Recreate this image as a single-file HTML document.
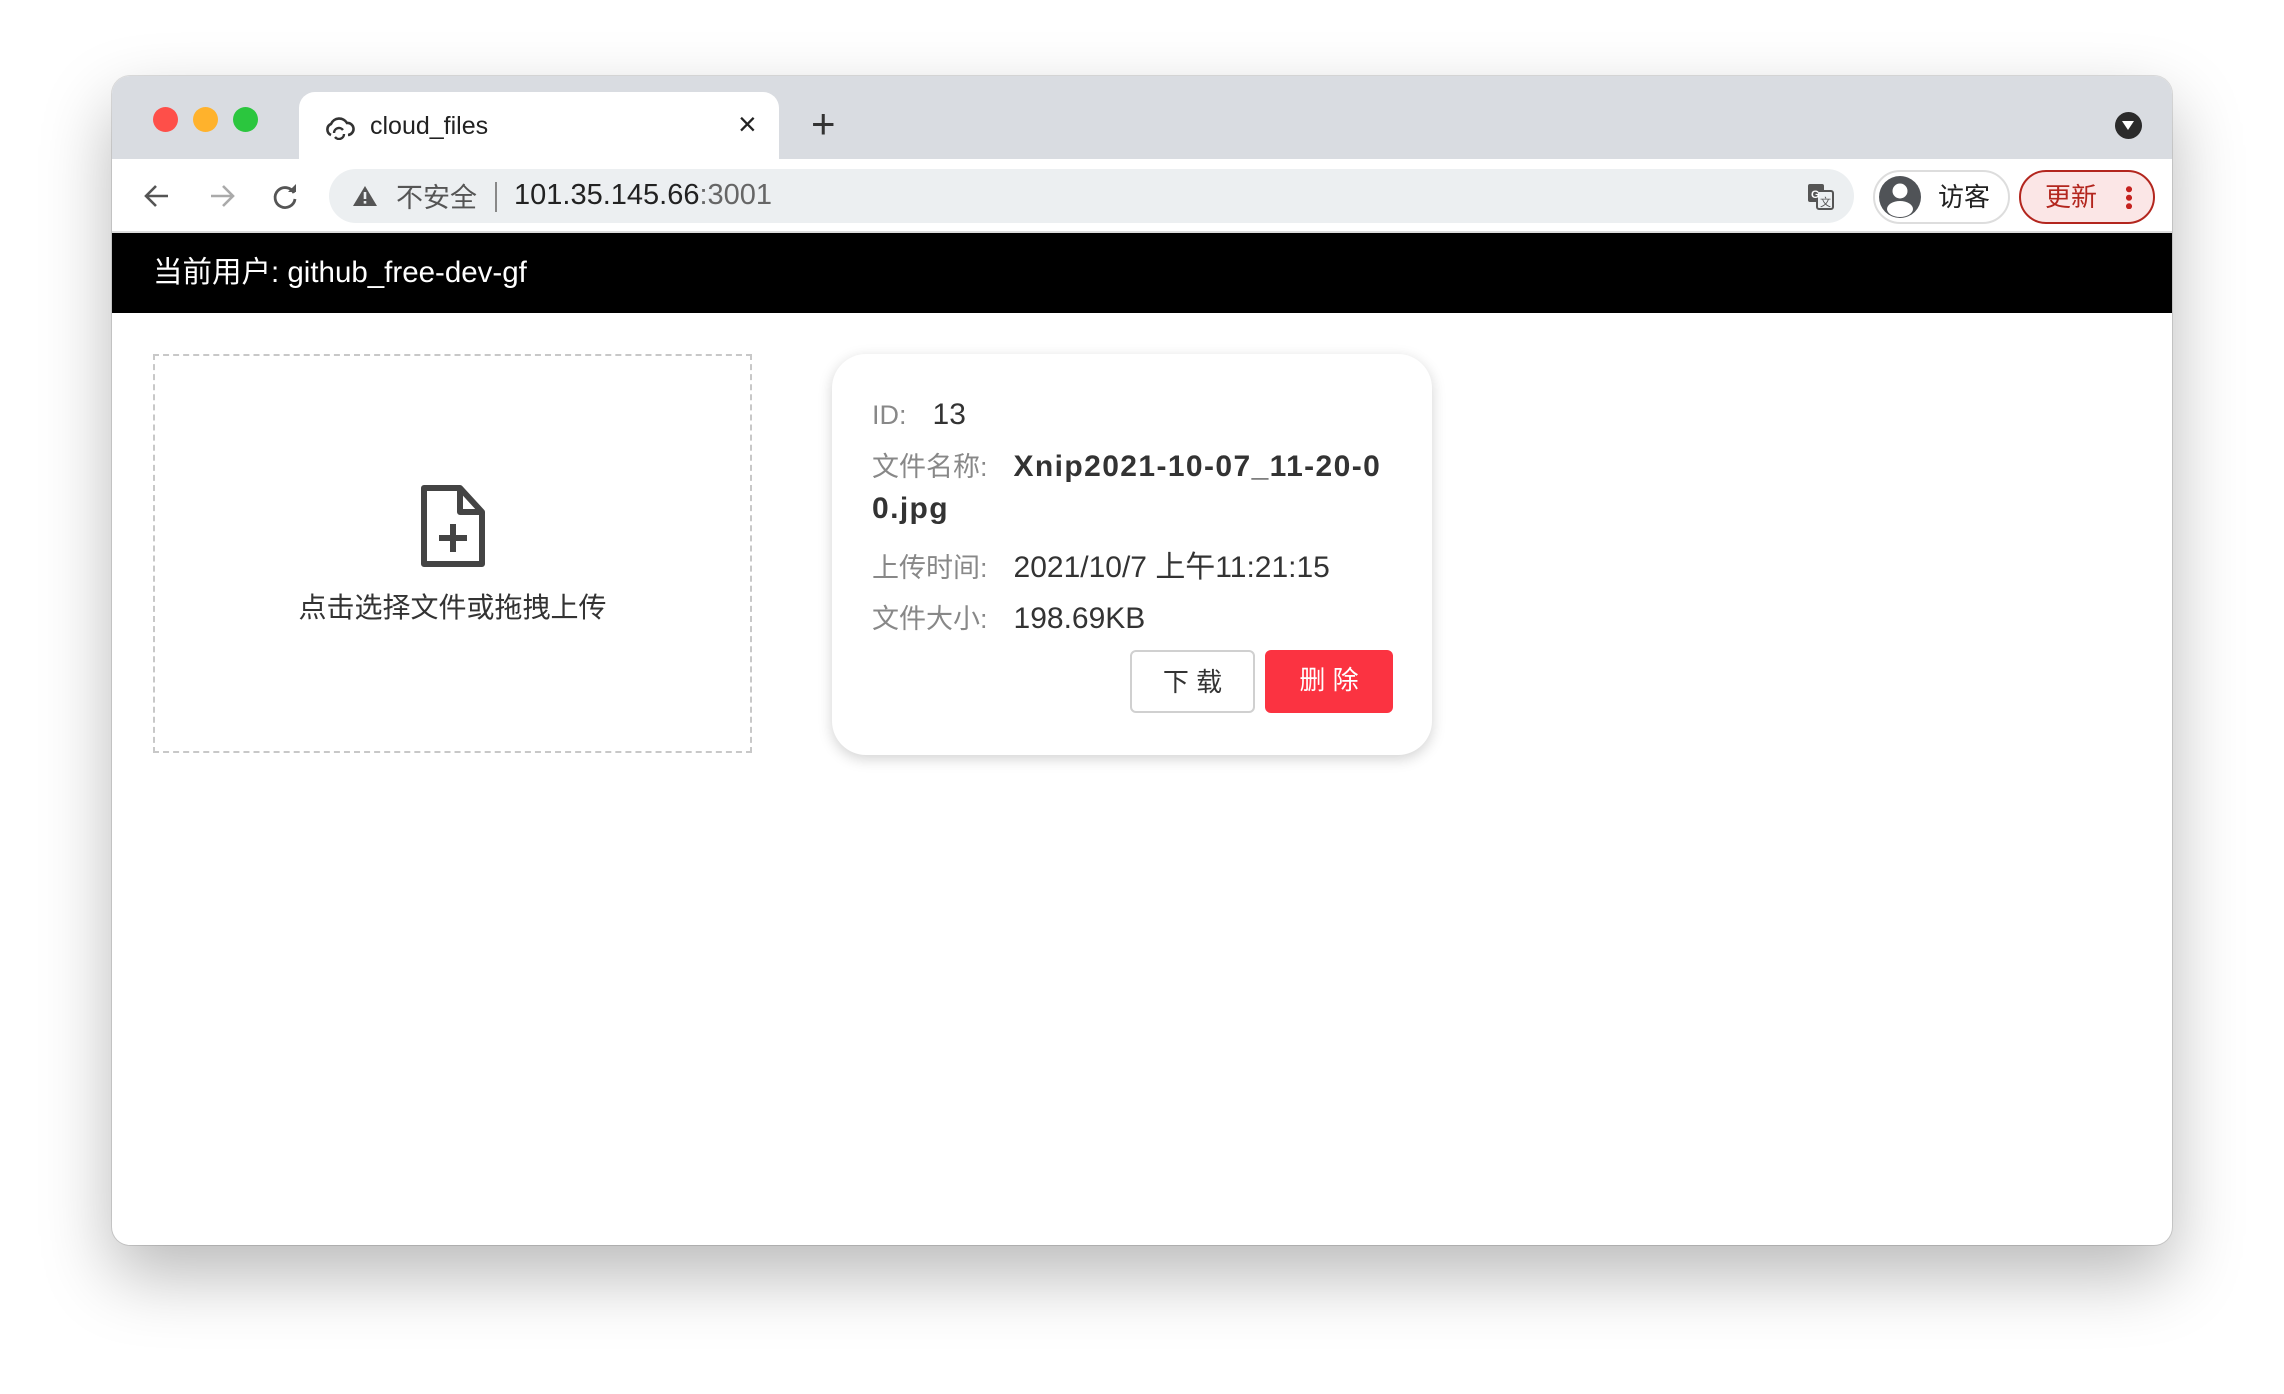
<!DOCTYPE html>
<html><head><meta charset="utf-8">
<style>
*{margin:0;padding:0;box-sizing:border-box}
body{width:2284px;height:1394px;background:#fff;position:relative;overflow:hidden;font-family:"Liberation Sans","Noto Sans CJK SC",sans-serif}
.win{position:absolute;left:112px;top:76px;width:2060px;height:1169px;border-radius:18px;background:#fff;overflow:hidden;box-shadow:0 30px 70px rgba(0,0,0,0.28),0 0 0 1px rgba(0,0,0,0.12)}
.tabbar{position:absolute;left:0;top:0;width:100%;height:83px;background:#d9dce1}
.dot{position:absolute;top:31px;width:25px;height:25px;border-radius:50%}
.tab{position:absolute;left:187px;top:16px;width:480px;height:68px;background:#fff;border-radius:16px 16px 0 0}
.tab span{position:absolute;left:71px;top:20px;font-size:25px;color:#222}
.toolbar{position:absolute;left:0;top:83px;width:100%;height:74px;background:#fff}
.omni{position:absolute;left:217px;top:10px;width:1525px;height:54px;border-radius:27px;background:#eceff1}
.blackbar{position:absolute;left:0;top:157px;width:100%;height:80px;background:#000;color:#fff;font-size:29.5px;line-height:80px;padding-left:41px}
.upload{position:absolute;left:41px;top:278px;width:599px;height:399px;border:2px dashed #c8c8c8}
.upload .t{position:absolute;left:0;width:100%;top:230px;text-align:center;font-size:28px;color:#333}
.card{position:absolute;left:720px;top:278px;width:600px;height:401px;border-radius:34px;background:#fff;box-shadow:0 4px 14px rgba(0,0,0,0.18)}
.row{position:absolute;left:40px;font-size:30px;color:#333;white-space:nowrap}
.row .l{color:#888;display:inline-block;margin-right:26px;font-size:27px}
.row b{letter-spacing:1.4px}
.btn{position:absolute;top:296px;height:63px;border-radius:6px;font-size:26px;text-align:center;line-height:61px}
</style></head><body>
<div class="win">
 <div class="tabbar">
  <div class="dot" style="left:41px;background:#fe4f49"></div>
  <div class="dot" style="left:81px;background:#ffb22c"></div>
  <div class="dot" style="left:121px;background:#2bc63e"></div>
  <div class="tab">
   <svg style="position:absolute;left:24px;top:22px" width="32" height="26" viewBox="0 0 32 26"><path d="M8 21 A6 6 0 0 1 8 10 A9 9 0 0 1 24 9 A6 6 0 0 1 25 21" fill="none" stroke="#333" stroke-width="2.6"/><path d="M11 19 A5 5 0 0 1 20 16 M21 20 A5 5 0 0 1 12 23" fill="none" stroke="#333" stroke-width="2.4"/></svg>
   <span>cloud_files</span>
   <span style="left:439px;top:14px;font-size:32px">×</span>
  </div>
  <div style="position:absolute;left:699px;top:27px;font-size:42px;color:#333;line-height:42px">+</div>
  <div style="position:absolute;left:2003px;top:36px;width:27px;height:27px;border-radius:50%;background:#2b2b2b"><div style="position:absolute;left:7px;top:9px;border-left:6.5px solid transparent;border-right:6.5px solid transparent;border-top:9px solid #fff"></div></div>
 </div>
 <div class="toolbar">
  <svg style="position:absolute;left:30px;top:22px" width="30" height="30" viewBox="0 0 30 30"><path d="M26 15H5M14 5L4 15l10 10" fill="none" stroke="#555" stroke-width="2.6"/></svg>
  <svg style="position:absolute;left:95px;top:22px" width="30" height="30" viewBox="0 0 30 30"><path d="M4 15h21M16 5l10 10-10 10" fill="none" stroke="#aaa" stroke-width="2.6"/></svg>
  <svg style="position:absolute;left:158px;top:22px" width="30" height="30" viewBox="0 0 30 30"><path d="M24 12A10 10 0 1 0 25 18" fill="none" stroke="#555" stroke-width="2.8"/><path d="M18 11h8V3z" fill="#555"/></svg>
  <div class="omni">
   <svg style="position:absolute;left:23px;top:16px" width="26" height="22" viewBox="0 0 26 22"><path d="M13 1L25 21H1z" fill="#555"/><rect x="11.7" y="7" width="2.6" height="7" fill="#eceff1"/><rect x="11.7" y="16" width="2.6" height="2.6" fill="#eceff1"/></svg>
   <span style="position:absolute;left:67px;top:7px;font-size:27px;color:#555">不安全</span>
   <div style="position:absolute;left:166px;top:13px;width:2px;height:30px;background:#888"></div>
   <span style="position:absolute;left:185px;top:10px;font-size:29px;color:#222">101.35.145.66<span style="color:#666">:3001</span></span>
   <svg style="position:absolute;left:1478px;top:14px" width="28" height="28" viewBox="0 0 28 28"><rect x="1" y="1" width="16" height="18" rx="2" fill="#555"/><rect x="10" y="8" width="16" height="18" rx="2" fill="#eceff1" stroke="#555" stroke-width="2"/><text x="4" y="15" font-size="11" fill="#fff" font-family="Liberation Sans" font-weight="bold">G</text><text x="13" y="23" font-size="11" fill="#555" font-family="Liberation Sans">文</text></svg>
  </div>
  <div style="position:absolute;left:1761px;top:11px;width:137px;height:54px;border-radius:27px;border:2px solid #ddd;background:#fff">
   <svg style="position:absolute;left:3px;top:3px" width="44" height="44" viewBox="0 0 44 44"><circle cx="22" cy="22" r="21" fill="#505357"/><circle cx="22" cy="16" r="7.5" fill="#fff"/><ellipse cx="22" cy="34" rx="13" ry="8" fill="#fff"/></svg>
   <span style="position:absolute;left:63px;top:5px;font-size:26px;color:#222">访客</span>
  </div>
  <div style="position:absolute;left:1907px;top:11px;width:136px;height:54px;border-radius:27px;border:2px solid #b3261e;background:#fbe6e6">
   <span style="position:absolute;left:24px;top:5px;font-size:26px;color:#b3261e">更新</span>
   <div style="position:absolute;left:105px;top:13px;width:6px;height:24px;background:radial-gradient(circle,#c5221f 2.8px,transparent 3.2px) 0 0/6px 8.5px repeat-y"></div>
  </div>
  <div style="position:absolute;left:0;bottom:0;width:100%;height:2px;background:#dcdcdc"></div>
 </div>
 <div class="blackbar">当前用户: github_free-dev-gf</div>
 <div class="upload">
  <svg style="position:absolute;left:265px;top:128px" width="66" height="84" viewBox="0 0 66 84"><path d="M4 4H40L62 28V80H4Z M40 4V28H62" fill="none" stroke="#444" stroke-width="6" stroke-linejoin="round"/><path d="M33 40V68M19 54H47" stroke="#444" stroke-width="6"/></svg>
  <div class="t">点击选择文件或拖拽上传</div>
 </div>
 <div class="card">
  <div class="row" style="top:44px"><span class="l">ID:</span>13</div>
  <div class="row" style="line-height:42px;top:92px"><span class="l">文件名称:</span><b>Xnip2021-10-07_11-20-0</b><br><b>0.jpg</b></div>
  <div class="row" style="top:188px"><span class="l">上传时间:</span>2021/10/7 上午11:21:15</div>
  <div class="row" style="top:243px"><span class="l">文件大小:</span>198.69KB</div>
  <div class="btn" style="left:298px;width:125px;border:2px solid #d0d0d0;color:#333;background:#fff">下 载</div>
  <div class="btn" style="left:433px;width:128px;background:#fb3341;color:#fff">删 除</div>
 </div>
</div>
</body></html>
